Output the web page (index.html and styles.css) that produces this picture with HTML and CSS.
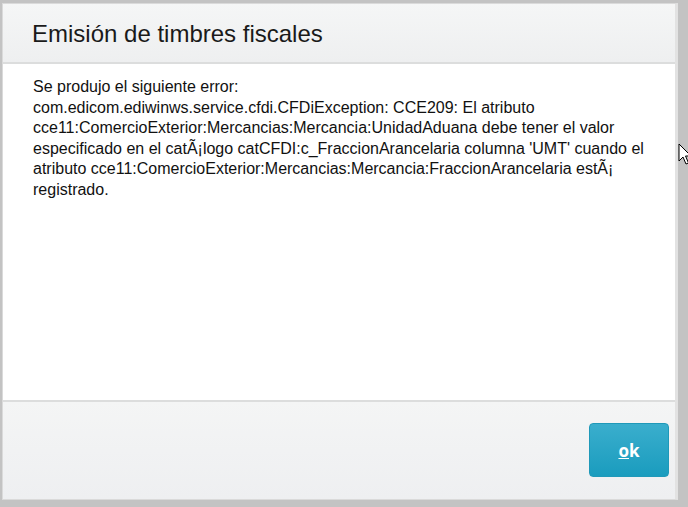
FILE: index.html
```html
<!DOCTYPE html>
<html lang="es">
<head>
<meta charset="utf-8">
<title>Emisión de timbres fiscales</title>
<link rel="stylesheet" href="styles.css">
</head>
<body>
<div class="dialog">
  <div class="dialog-header">
    <h1 class="dialog-title">Emisión de timbres fiscales</h1>
  </div>
  <div class="dialog-body">
    <p class="message">Se produjo el siguiente error:<br>com.edicom.ediwinws.service.cfdi.CFDiException: CCE209: El atributo cce11:ComercioExterior:Mercancias:Mercancia:UnidadAduana debe tener el valor especificado en el catÃ¡logo catCFDI:c_FraccionArancelaria columna 'UMT' cuando el atributo cce11:ComercioExterior:Mercancias:Mercancia:FraccionArancelaria estÃ¡ registrado.</p>
  </div>
  <div class="dialog-footer">
    <button class="btn-ok" type="button"><span class="accel">o</span>k</button>
  </div>
</div>
<svg class="cursor" width="14" height="24" viewBox="0 0 14 24" aria-hidden="true">
  <path d="M1 1 L1 18 L5 14 L8 21 L10.5 20 L7.5 13 L13 13 Z" fill="#fff" stroke="#000" stroke-width="1" stroke-linejoin="round"/>
</svg>
</body>
</html>
```
FILE: styles.css
```css
html, body {
  margin: 0;
  padding: 0;
  height: 100%;
}
body {
  background: #c3c3c3;
  font-family: "Liberation Sans", Arial, sans-serif;
  overflow: hidden;
  padding: 3px 0 0 2px;
  box-sizing: border-box;
  position: relative;
}
.dialog {
  width: 676px;
  height: 497px;
  box-sizing: border-box;
  border: 1px solid #dadada;
  border-right-width: 3px;
  border-right-color: #e2e2e2;
  background: #fff;
  display: flex;
  flex-direction: column;
}
.dialog-header {
  height: 58px;
  flex: none;
  background: linear-gradient(#f5f6f6, #eeeff0);
  border-bottom: 2px solid #dcdddd;
  display: flex;
  align-items: center;
  padding-left: 29px;
}
.dialog-title {
  margin: 0;
  font-weight: normal;
  font-size: 24px;
  color: #1a1a1a;
  padding-top: 1px;
}
.dialog-body {
  flex: 1;
  padding: 13px 26px 0 30px;
}
.message {
  margin: 0;
  font-size: 16px;
  line-height: 20.6px;
  color: #111;
}
.dialog-footer {
  height: 99px;
  flex: none;
  background: linear-gradient(#f4f5f5, #eeeff1);
  border-top: 2px solid #dcdddd;
  display: flex;
  justify-content: flex-end;
  align-items: flex-start;
  padding: 21px 6px 0 0;
  box-sizing: border-box;
}
.btn-ok {
  width: 80px;
  height: 54px;
  border: 1px solid #1f99b9;
  border-radius: 4px;
  background: linear-gradient(#3aaecd, #1a9cbe);
  color: #fff;
  font-family: "Open Sans", "Liberation Sans", sans-serif;
  font-weight: bold;
  font-size: 17px;
  padding: 0;
}
.accel {
  text-decoration: underline;
}
.cursor {
  position: absolute;
  left: 678px;
  top: 143px;
}
```
